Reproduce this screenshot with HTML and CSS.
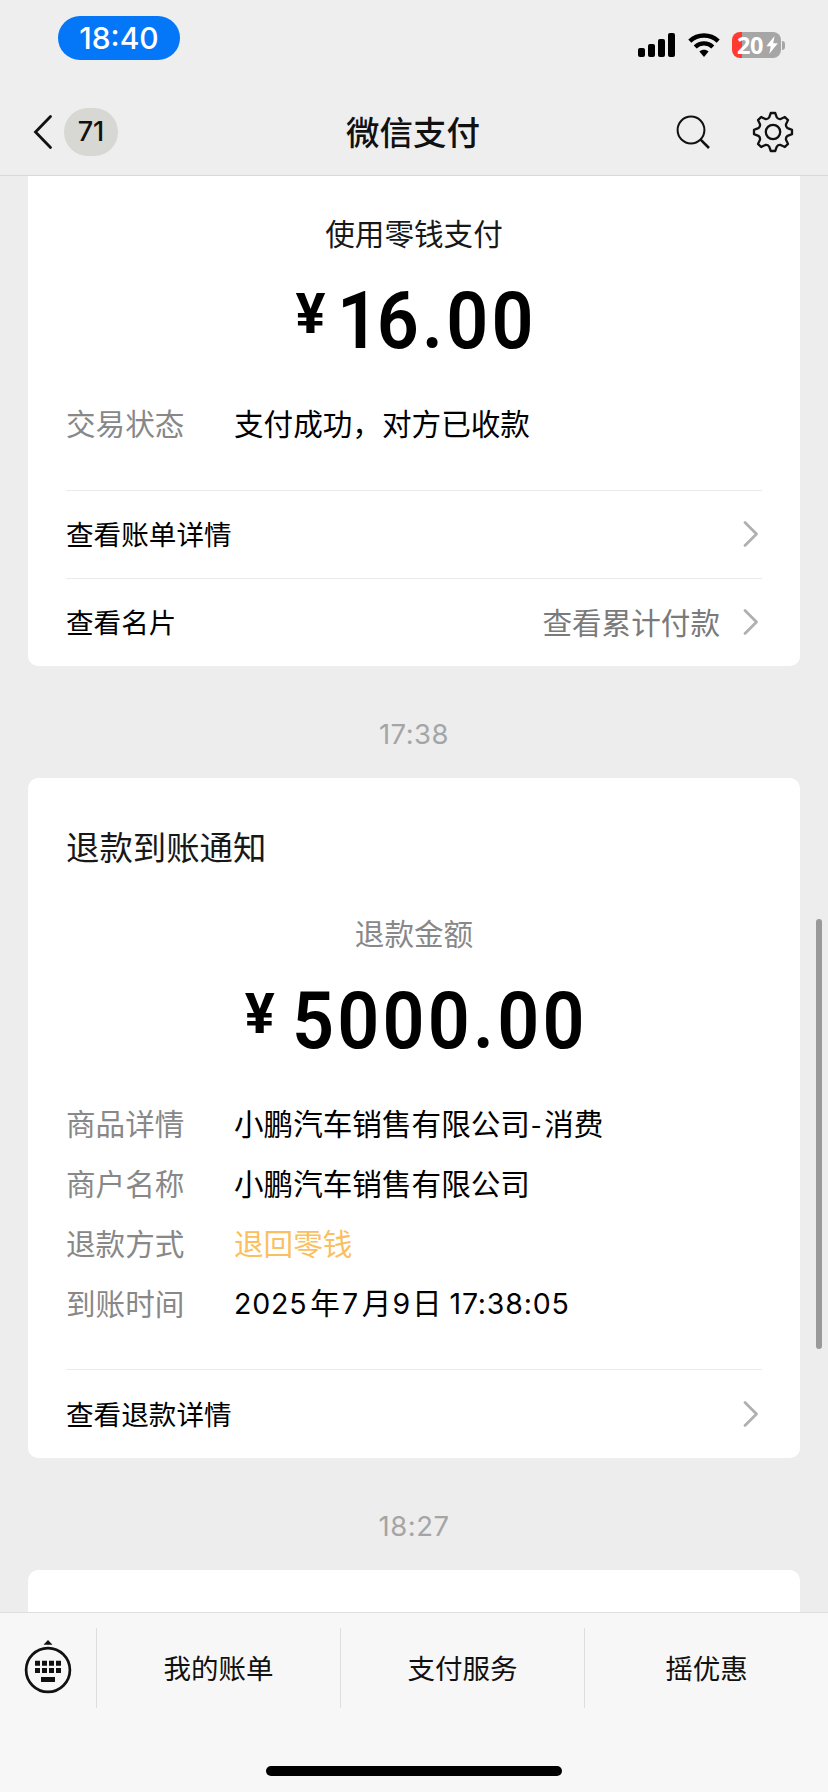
FILE: index.html
```html
<!DOCTYPE html>
<html lang="zh-CN">
<head>
<meta charset="utf-8">
<title>微信支付</title>
<link rel="stylesheet" href="styles.css">
</head>
<body>
<div class="screen">
  <header class="header">
    <div class="status">
      <span class="clock">18:40</span>
      <div class="indicators">
        <svg class="signal" width="38" height="26" viewBox="0 0 38 26"><rect x="0" y="16" width="7" height="9" rx="2"/><rect x="10" y="12" width="7" height="13" rx="2"/><rect x="20" y="7" width="7" height="18" rx="2"/><rect x="30" y="1" width="7" height="24" rx="2"/></svg>
        <svg class="wifi" width="32" height="26" viewBox="0 0 32 26"><path d="M1.8 9.2C9.8 1.6 22.2 1.6 30.2 9.2" fill="none" stroke="#000" stroke-width="4.4"/><path d="M7.2 15C12.2 10.2 19.8 10.2 24.8 15" fill="none" stroke="#000" stroke-width="4.2"/><path d="M11.4 19.4C14 17.2 18 17.2 20.6 19.4L16 25Z"/></svg>
        <div class="battery">
          <div class="cell"><span class="level">20</span><svg class="bolt" width="12" height="18" viewBox="0 0 12 18"><path d="M8.6 0L0.3 10.2h4.5L3.2 18 11.8 7.200H7.200Z" fill="#fff"/></svg></div>
          <div class="tip"></div>
        </div>
      </div>
    </div>
    <nav class="nav">
      <div class="nav-side">
        <svg class="back" width="22" height="36" viewBox="0 0 22 36"><path d="M18.5 2.5L3.5 18 18.5 33.5" fill="none" stroke="#111" stroke-width="2.8" stroke-linecap="round"/></svg>
        <span class="unread">71</span>
      </div>
      <h1 class="nav-title">微信支付</h1>
      <div class="nav-side nav-tools">
        <svg width="36" height="36" viewBox="0 0 36 36"><g fill="none" stroke="#111" stroke-width="2"><circle cx="16" cy="16" r="13.4"/><path d="M25.6 25.6L34 34" stroke-width="2.6"/></g></svg>
        <svg width="42" height="42" viewBox="-21 -21 42 42"><g fill="none" stroke="#111" stroke-width="2.3" stroke-linejoin="round"><circle r="7.2"/><path d="M-2.2-19H2.2L3.8-14.6Q5.2-12.6 7.64-13L11.88-15 15-11.88 13-7.64Q12.6-5.2 14.6-3.8L19-2.2V2.2L14.6 3.8Q12.6 5.2 13 7.64L15 11.88 11.88 15 7.64 13Q5.2 12.6 3.8 14.6L2.2 19H-2.2L-3.8 14.6Q-5.2 12.6-7.64 13L-11.88 15-15 11.88-13 7.64Q-12.6 5.2-14.6 3.8L-19 2.2V-2.2L-14.6-3.8Q-12.6-5.2-13-7.64L-15-11.88-11.88-15-7.64-13Q-5.2-12.6-3.8-14.6Z"/></g></svg>
      </div>
    </nav>
  </header>

  <main class="feed">
    <section class="card card-first">
      <div class="caption caption-dark">使用零钱支付</div>
      <div class="amount"><span class="yen">¥</span><span class="digits digits-one"><span class="lead">1</span>6.00</span></div>
      <div class="fields">
        <div class="field"><span class="label">交易状态</span><span class="value">支付成功，对方已收款</span></div>
      </div>
      <div class="link"><span>查看账单详情</span><svg class="chev" width="18" height="28" viewBox="0 0 18 28"><path d="M3 2.5L14.5 14 3 25.5"/></svg></div>
      <div class="link"><span>查看名片</span><span class="more">查看累计付款</span><svg class="chev" width="18" height="28" viewBox="0 0 18 28"><path d="M3 2.5L14.5 14 3 25.5"/></svg></div>
    </section>

    <time class="stamp">17:38</time>

    <section class="card card-refund">
      <h2 class="card-title">退款到账通知</h2>
      <div class="caption">退款金额</div>
      <div class="amount"><span class="yen">¥</span><span class="digits">5000.00</span></div>
      <div class="fields">
        <div class="field"><span class="label">商品详情</span><span class="value">小鹏汽车销售有限公司<span class="hyphen">-</span>消费</span></div>
        <div class="field"><span class="label">商户名称</span><span class="value">小鹏汽车销售有限公司</span></div>
        <div class="field"><span class="label">退款方式</span><span class="value accent">退回零钱</span></div>
        <div class="field"><span class="label">到账时间</span><span class="value"><span class="num">2025</span><span class="year">年</span><span class="num">7</span><span class="month">月</span><span class="num">9</span><span class="day">日</span><span class="num hour">17:38:05</span></span></div>
      </div>
      <div class="link"><span>查看退款详情</span><svg class="chev" width="18" height="28" viewBox="0 0 18 28"><path d="M3 2.5L14.5 14 3 25.5"/></svg></div>
    </section>

    <time class="stamp">18:27</time>

    <section class="card card-next"></section>
    <div class="scrollbar"></div>
  </main>

  <footer class="footer">
    <div class="menu">
      <div class="keyboard">
        <svg width="50" height="58" viewBox="0 0 50 58"><path d="M20.5 8.8L25 4l4.5 4.8Z" fill="#111"/><circle cx="25" cy="34" r="21.9" fill="none" stroke="#111" stroke-width="2.7"/><g fill="#111"><path d="M12 24.7h5v5h-5zM19 24.7h5v5h-5zM26 24.7h5v5h-5zM33 24.7h5v5h-5zM12 32h5v5h-5zM19 32h5v5h-5zM26 32h5v5h-5zM33 32h5v5h-5zM18 41h14v5H18z"/></g></svg>
      </div>
      <div class="tab">我的账单</div>
      <div class="tab">支付服务</div>
      <div class="tab">摇优惠</div>
    </div>
    <div class="home"></div>
  </footer>
</div>
</body>
</html>
```
FILE: styles.css
```css
* { box-sizing: border-box; }

body {
  margin: 0;
  background: #ededed;
  font-family: "Noto Sans CJK SC", sans-serif;
  color: #000;
}

.screen {
  width: 828px;
  height: 1792px;
  display: flex;
  flex-direction: column;
  overflow: hidden;
  white-space: nowrap;
}

/* Header */
.header {
  flex: none;
  height: 176px;
  border-bottom: 1px solid #d8d8d8;
  background: #eee;
}

.status {
  height: 88px;
  padding: 16px 43px 0 58px;
  display: flex;
  justify-content: space-between;
  align-items: flex-start;
}

.clock {
  width: 122px;
  height: 44px;
  border-radius: 22px;
  background: #0477f8;
  color: #fff;
  font: 500 30px/44px Inter, sans-serif;
  text-align: center;
}

.indicators {
  display: flex;
  align-items: center;
  height: 26px;
  margin-top: 16px;
}

.wifi { margin-left: 12px; }

.battery {
  display: flex;
  align-items: center;
  margin-left: 12px;
}

.cell {
  width: 49px;
  height: 26px;
  padding-left: 5px;
  border-radius: 8px;
  background: linear-gradient(to right, #ff3b30 10px, #a6a6a6 10px);
  display: flex;
  align-items: center;
}

.level {
  width: 28px;
  color: #fff;
  font: 700 23.5px/26px "Noto Sans", sans-serif;
  letter-spacing: -0.5px;
}

.bolt { margin-left: 1px; }

.tip {
  width: 3px;
  height: 9px;
  margin-left: 1px;
  border-radius: 0 4px 4px 0;
  background: #a6a6a6;
}

.nav {
  height: 87px;
  padding: 0 34px 0 32px;
  display: flex;
  justify-content: space-between;
  align-items: center;
}

.nav-side {
  width: 150px;
  display: flex;
  align-items: center;
}

.nav-tools {
  justify-content: flex-end;
  gap: 41px;
}

.unread {
  width: 54px;
  height: 48px;
  margin-left: 10px;
  border-radius: 24px;
  background: #d7d7d3;
  color: #111;
  font: 500 27px/48px Inter, sans-serif;
  text-align: center;
}

.nav-title {
  margin: 0;
  padding-bottom: 2px;
  font-size: 33.5px;
  font-weight: 500;
  line-height: 60px;
  color: #111;
}

/* Message feed */
.feed {
  flex: 1;
  min-height: 0;
  padding: 0 28px;
  overflow: hidden;
  position: relative;
}

.card {
  padding: 0 38px;
  border-radius: 10px;
  background: #fff;
}

.card-first {
  height: 490px;
  padding-top: 33px;
  border-radius: 0 0 10px 10px;
}

.card-refund {
  height: 680px;
  padding-top: 43px;
}

.card-next { height: 60px; }

.card-title {
  margin: 0;
  font-size: 33.4px;
  font-weight: 400;
  line-height: 50px;
  color: #181818;
}

.caption {
  font-size: 29.6px;
  line-height: 48px;
  text-align: center;
  color: #888;
}

.caption-dark { color: #181818; }

.card-refund .caption { margin-top: 38px; }

.amount {
  height: 80px;
  margin-top: 24px;
  padding-left: 4px;
  display: flex;
  justify-content: center;
  font-family: Roboto, sans-serif;
}

.yen {
  font-size: 56px;
  font-weight: 700;
  line-height: 66px;
}

/* Condensed figures; the negative margin takes back the width the scale frees */
.digits {
  margin-left: 17px;
  margin-right: -26px;
  font-size: 80px;
  font-weight: 600;
  line-height: 80px;
  letter-spacing: 3.5px;
  transform: scaleX(0.92);
  transform-origin: left;
}

.digits-one {
  margin-left: 12px;
  margin-right: -18px;
}

.lead { letter-spacing: -2.5px; }

.fields { margin-top: 32px; }

.field {
  display: flex;
  height: 60px;
  align-items: center;
  font-size: 29.6px;
  line-height: 44px;
}

.label {
  width: 168px;
  color: #888;
}

.accent { color: #fabf60; }

.num {
  font-family: Inter, sans-serif;
  font-size: 28.5px;
  letter-spacing: 0.8px;
}

.hyphen { margin: 0 3px 0 1px; }

.year { margin: 0 2px 0 3px; }

.month { margin: 0 1px 0 3px; }

.day { margin-left: 1px; }

.hour { margin-left: 8px; }

.link {
  height: 88px;
  padding-bottom: 3px;
  border-top: 1.5px solid #ebebeb;
  display: flex;
  align-items: center;
  font-size: 27.6px;
}

.fields + .link { margin-top: 37px; }

.card-refund .fields + .link {
  margin-top: 36px;
  padding-bottom: 2px;
}

.more {
  margin-left: auto;
  font-size: 29.6px;
  color: #7a7a7a;
}

.chev {
  margin-left: auto;
  margin-right: 2px;
  margin-top: 2px;
  fill: none;
  stroke: #b0b0b0;
  stroke-width: 2.8;
  stroke-linecap: round;
  stroke-linejoin: round;
}

.more + .chev { margin-left: 22px; }

.stamp {
  display: block;
  height: 112px;
  padding-top: 24px;
  font: 400 27.5px/88px Inter, sans-serif;
  letter-spacing: 0.5px;
  text-align: center;
  color: #a5a5a5;
}

/* Scroll indicator floats over the feed */
.scrollbar {
  position: absolute;
  top: 743px;
  right: 6px;
  width: 6px;
  height: 430px;
  border-radius: 3px;
  background: #999;
}

/* Footer */
.footer {
  flex: none;
  height: 180px;
  border-top: 1px solid #dedede;
  background: #f7f7f7;
}

.menu {
  height: 95px;
  padding-top: 15px;
  display: flex;
}

.keyboard {
  width: 96px;
  padding-bottom: 6px;
  display: flex;
  justify-content: center;
  align-items: center;
}

.tab {
  flex: 1;
  border-left: 1px solid #dedede;
  font-size: 27.5px;
  line-height: 78px;
  text-align: center;
  color: #111;
}

.home {
  width: 296px;
  height: 10px;
  margin: 58px auto 0;
  border-radius: 5px;
  background: #000;
}
```
